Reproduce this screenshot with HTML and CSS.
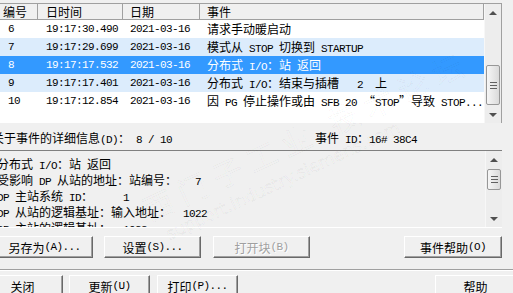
FILE: index.html
```html
<!DOCTYPE html>
<html lang="zh-CN">
<head>
  <meta charset="UTF-8" />
  <title>诊断缓冲区</title>
  <link rel="stylesheet" href="styles.css">
</head>
<body>
  <div class="dlg">
    <div class="list">
      <div class="grid">
        <div class="row head">
          <div class="c c1">编号</div>
          <div class="c c2">日时间</div>
          <div class="c c3">日期</div>
          <div class="c c4">事件</div>
        </div>
        <div class="row">
          <div class="c c1 m">6</div>
          <div class="c c2 m">19:17:30.490</div>
          <div class="c c3 m">2021-03-16</div>
          <div class="c c4">请求手动暖启动</div>
        </div>
        <div class="row alt">
          <div class="c c1 m">7</div>
          <div class="c c2 m">19:17:29.699</div>
          <div class="c c3 m">2021-03-16</div>
          <div class="c c4">模式从<span class="m"> STOP </span>切换到<span class="m"> STARTUP</span></div>
        </div>
        <div class="row sel">
          <div class="c c1 m">8</div>
          <div class="c c2 m">19:17:17.532</div>
          <div class="c c3 m">2021-03-16</div>
          <div class="c c4">分布式<span class="m"> I/O</span>：站<span class="m"> </span>返回</div>
        </div>
        <div class="row alt">
          <div class="c c1 m">9</div>
          <div class="c c2 m">19:17:17.401</div>
          <div class="c c3 m">2021-03-16</div>
          <div class="c c4">分布式<span class="m"> I/O</span>：结束与插槽<span class="m">   2  </span>上</div>
        </div>
        <div class="row">
          <div class="c c1 m">10</div>
          <div class="c c2 m">19:17:12.854</div>
          <div class="c c3 m">2021-03-16</div>
          <div class="c c4">因<span class="m"> PG </span>停止操作或由<span class="m"> SFB 20 </span>“<span class="m">STOP</span>”导致<span class="m"> STOP...</span></div>
        </div>
      </div>
      <div class="sb sb-list">
        <div class="arr up"></div>
        <div class="thumb"></div>
        <div class="arr down"></div>
      </div>
    </div>

    <div class="info">
      <div class="lbl">关于事件的详细信息<span class="m">(D)</span>：<span class="m"> 8 / 10</span></div>
      <div class="evid">事件<span class="m"> ID</span>：<span class="m">16# 38C4</span></div>
    </div>

    <div class="detail">
      <div class="txt">
        <p>分布式<span class="m"> I/O</span>：站<span class="m"> </span>返回</p>
        <p>受影响<span class="m"> DP </span>从站的地址：站编号：<span class="m">   7</span></p>
        <p><span class="m">DP </span>主站系统<span class="m"> ID</span>：<span class="m">     1</span></p>
        <p><span class="m">DP </span>从站的逻辑基址：输入地址：<span class="m">  1022</span></p>
        <p><span class="m">DP </span>主站的逻辑基址：<span class="m">  1023</span></p>
      </div>
      <div class="sb sb-detail">
        <div class="arr up"></div>
        <div class="thumb"></div>
        <div class="arr down"></div>
      </div>
    </div>

    <div class="btns top-btns">
      <div class="btn wide">另存为<span class="m">(A)...</span></div>
      <div class="btn wide">设置<span class="m">(S)...</span></div>
      <div class="btn wide off">打开块<span class="m">(B)</span></div>
      <div class="btn wide push">事件帮助<span class="m">(O)</span></div>
    </div>

    <div class="sep"></div>

    <div class="btns bottom-btns">
      <div class="btn">关闭</div>
      <div class="btn">更新<span class="m">(U)</span></div>
      <div class="btn">打印<span class="m">(P)...</span></div>
      <div class="btn push">帮助</div>
    </div>

    <div class="wm">
      <div class="wm-big">西门子工业 技术论坛</div>
      <div class="wm-url">support.industry.siemens.com</div>
    </div>
  </div>
</body>
</html>
```

FILE: styles.css
```css
* {
  margin: 0;
  padding: 0;
  box-sizing: border-box;
}

body {
  background: #f0f0f0;
  color: #000;
  font-family: "Noto Sans CJK SC", sans-serif;
  font-size: 12px;
  overflow: hidden;
}

.m {
  font-family: "Liberation Mono", monospace;
  font-size: 11px;
  letter-spacing: -0.6px;
}

.dlg {
  position: relative;
  width: 513px;
  height: 293px;
  padding-top: 3px;
  overflow: hidden;
}

/* event list */
.list {
  display: flex;
  height: 120px;
  margin: 0 11px 0 -2px;
  border-top: 1px solid #a0a0a0;
  border-right: 1px solid #a0a0a0;
  background: #fff;
}

.grid {
  flex: 1;
}

.row {
  display: grid;
  grid-template-columns: 40px 85px 77px 1fr;
  height: 18px;
  line-height: 18px;
  white-space: pre;
}

.row.head {
  height: 16px;
  line-height: 15px;
  background: #f0f0f0;
  border-bottom: 1px solid #a0a0a0;
}

.row.head .c {
  border-right: 1px solid #a0a0a0;
}

.c {
  overflow: hidden;
  padding-left: 7px;
}

.c1 { padding-left: 10px; }
.head .c1 { padding-left: 5px; }
.c2 { padding-left: 8px; }

.row.alt { background: #dcecfc; }
.row.sel { background: #3399ff; color: #fff; }

/* scrollbars */
.sb {
  width: 17px;
  display: flex;
  flex-direction: column;
  background: #ededed;
  border-left: 1px solid #f7f7f7;
}

.arr {
  height: 17px;
  display: flex;
  align-items: center;
  justify-content: center;
}

.arr::after {
  content: "";
  border-left: 4px solid transparent;
  border-right: 4px solid transparent;
}

.arr.up::after { border-bottom: 4px solid #505050; }
.arr.down { margin-top: auto; }
.arr.down::after { border-top: 4px solid #505050; }

.thumb {
  margin: 0 1px;
  border: 1px solid #979797;
  border-radius: 2px;
  background: linear-gradient(90deg, #f6f6f6, #dadada);
  display: flex;
  align-items: center;
  justify-content: center;
}

.thumb::after {
  content: "";
  width: 7px;
  height: 5px;
  border-top: 1px solid #606060;
  border-bottom: 1px solid #606060;
  background: linear-gradient(#606060, #606060) center / 100% 1px no-repeat;
}

.sb-list .thumb { height: 40px; margin-top: 44px; }
.sb-detail .thumb { height: 21px; margin-top: 1px; }

/* info line */
.info {
  display: flex;
  align-items: center;
  height: 27px;
  padding-top: 2px;
  white-space: pre;
}

.lbl { margin-left: -8px; }
.evid { margin-left: auto; margin-right: 96px; }

/* detail text */
.detail {
  display: flex;
  height: 78px;
  margin: 0 11px 0 -2px;
  border-top: 1px solid #808080;
  border-bottom: 1px solid #fff;
}

.txt {
  flex: 1;
  overflow: hidden;
  padding-top: 5px;
}

.txt p {
  height: 16px;
  line-height: 16px;
  margin-left: -1px;
  white-space: pre;
}

/* buttons */
.btns {
  display: flex;
}

.top-btns {
  margin: 8px 11px 0 -4px;
  gap: 11px;
}

.bottom-btns {
  margin: 4px -3px 0 -18px;
  gap: 6px;
}

.btn {
  width: 81px;
  height: 22px;
  display: flex;
  align-items: center;
  justify-content: center;
  white-space: pre;
  background: #f0f0f0;
  border: 1px solid;
  border-color: #fff #696969 #696969 #fff;
  box-shadow: inset -1px -1px 0 #a0a0a0;
}

.btn.wide { width: 97px; }
.btn.wide.push { width: 98px; }
.btn.off { color: #a0a0a0; text-shadow: 1px 1px 0 #fff; margin-left: 1px; }
.bottom-btns .btn:nth-child(3) { margin-left: 1px; }
.btn.push { margin-left: auto; }

.sep {
  margin-top: 11px;
  border-top: 1px solid #a0a0a0;
  border-bottom: 1px solid #fff;
}

/* faint forum watermark over the dialog */
.wm {
  position: absolute;
  left: 135px;
  top: 190px;
  transform: rotate(-25deg);
  transform-origin: left top;
  pointer-events: none;
  white-space: nowrap;
}

.wm-big {
  font-size: 30px;
  letter-spacing: 8px;
  color: transparent;
  -webkit-text-stroke: 1px rgba(0, 0, 0, 0.035);
}

.wm-url {
  margin-left: 10px;
  font-family: "DejaVu Sans", sans-serif;
  font-size: 17px;
  color: transparent;
  -webkit-text-stroke: 1px rgba(0, 0, 0, 0.035);
}
```
